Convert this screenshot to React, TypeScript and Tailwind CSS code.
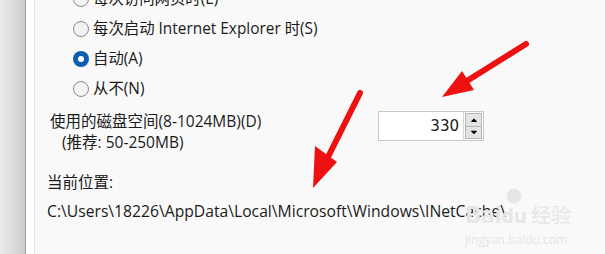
import { FaCaretUp, FaCaretDown } from "react-icons/fa";

const font = "font-['Open_Sans','Noto_Sans_CJK_SC',sans-serif]";

interface Option {
  label: string;
  checked?: boolean;
}

const options: Option[] = [
  { label: "每次访问网页时(E)" },
  { label: "每次启动 Internet Explorer 时(S)" },
  { label: "自动(A)", checked: true },
  { label: "从不(N)" },
];

function Radio({ checked }: { checked?: boolean }) {
  if (checked) {
    return (
      <span className="flex h-[16px] w-[16px] shrink-0 items-center justify-center rounded-full bg-[#0a5fb0]">
        <span className="h-[6px] w-[6px] rounded-full bg-white" />
      </span>
    );
  }
  return <span className="h-[16px] w-[16px] shrink-0 rounded-full border border-[#8b8b8b] bg-[#f3f3f3]" />;
}

function Arrows() {
  return (
    <svg className="pointer-events-none absolute inset-0" width="605" height="254">
      <line x1="526" y1="44" x2="462" y2="84" stroke="#ee1111" strokeWidth="6" strokeLinecap="round" />
      <polygon points="442,97 462,71 474,90" fill="#ee1111" />
      <line x1="360" y1="93" x2="328" y2="157" stroke="#ee1111" strokeWidth="6" strokeLinecap="round" />
      <polygon points="313,188 315,146 337,162" fill="#ee1111" />
    </svg>
  );
}

function Watermark() {
  return (
    <div className="pointer-events-none absolute left-[465px] top-[188px] flex flex-col items-start text-[#e6e6e6]">
      <div className="flex items-end">
        <span className="text-[24px] font-bold leading-none tracking-tight">Bai</span>
        <div className="flex flex-col items-center">
          <span className="mb-[2px] text-[16px] leading-none">●</span>
          <span className="text-[20px] font-bold leading-none">du</span>
        </div>
        <span className="ml-[4px] text-[20px] leading-none">经验</span>
      </div>
      <span className="mt-[8px] text-[12px] leading-none">jingyan.baidu.com</span>
    </div>
  );
}

export default function App() {
  return (
    <div className={`relative flex h-[254px] w-[605px] overflow-hidden bg-[#f9f9f9] text-[#1b1b1b] ${font}`}>
      {/* window edge */}
      <div className="w-[25px] shrink-0 bg-gradient-to-r from-[#ececec] to-[#cdcdcd]" />
      <div className="w-px shrink-0 bg-[#9c9c9c]" />
      <div className="w-[8px] shrink-0 bg-white" />
      <div className="w-px shrink-0 bg-[#e3e3e3]" />

      <div className="flex-1">
        <div className="-mt-[16px] pl-[38px]">
          {options.map((opt, i) => (
            <div key={i} className="flex h-[30px] items-center gap-[4px]">
              <Radio checked={opt.checked} />
              <span className="text-[15.4px] leading-none">{opt.label}</span>
            </div>
          ))}
        </div>

        <div className="mt-[7px] flex items-start">
          <div className="w-[343px] pl-[15px] text-[15.5px] leading-[21px]">
            <div>使用的磁盘空间(8-1024MB)(D)</div>
            <div className="pl-[12px]">(推荐: 50-250MB)</div>
          </div>
          <div className="flex h-[30px] w-[106px] border border-[#c9c9c9] bg-white">
            <div className="flex flex-1 items-center justify-end pr-[4px] font-['DejaVu_Sans',sans-serif] text-[15px]">
              330
            </div>
            <div className="flex w-[20px] flex-col border-l border-[#d5d5d5] p-px">
              <div className="flex flex-1 items-center justify-center border border-[#b5b5b5] bg-[#e4e4e4]">
                <FaCaretUp className="text-[10px] text-black" />
              </div>
              <div className="flex flex-1 items-center justify-center border border-t-0 border-[#b5b5b5] bg-[#e4e4e4]">
                <FaCaretDown className="text-[10px] text-black" />
              </div>
            </div>
          </div>
        </div>

        <div className="mt-[19px] pl-[12px] text-[15.5px] leading-[20px]">当前位置:</div>
        <div className="mt-[9px] pl-[12px] text-[15.7px] leading-[20px]">
          C:\Users\18226\AppData\Local\Microsoft\Windows\INetCache\
        </div>
      </div>

      <Watermark />
      <Arrows />
    </div>
  );
}
